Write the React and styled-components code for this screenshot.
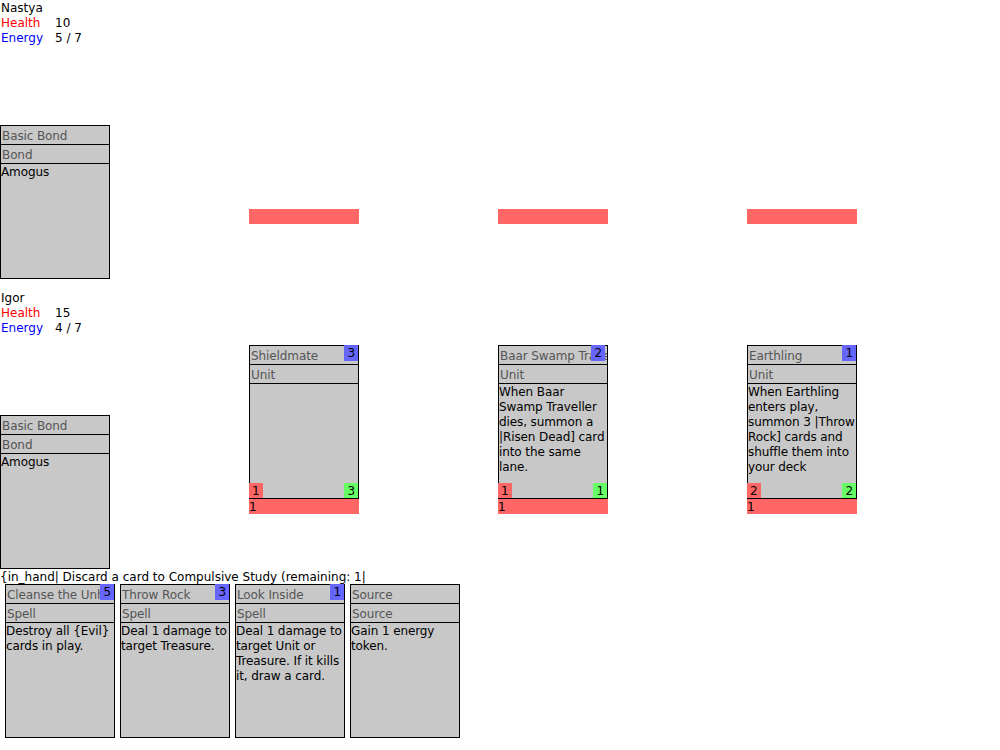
import React from "react";
import styled, { createGlobalStyle } from "styled-components";

const players = [
  {
    name: "Nastya",
    health: 10,
    energy: "5 / 7",
    bond: { title: "Basic Bond", type: "Bond", text: "Amogus" },
    lanes: [null, null, null],
  },
  {
    name: "Igor",
    health: 15,
    energy: "4 / 7",
    bond: { title: "Basic Bond", type: "Bond", text: "Amogus" },
    lanes: [
      { title: "Shieldmate", type: "Unit", cost: 3, attack: 1, hp: 3, text: "" },
      {
        title: "Baar Swamp Traveller",
        type: "Unit",
        cost: 2,
        attack: 1,
        hp: 1,
        text: "When Baar Swamp Traveller dies, summon a |Risen Dead] card into the same lane.",
        costInset: true,
      },
      {
        title: "Earthling",
        type: "Unit",
        cost: 1,
        attack: 2,
        hp: 2,
        text: "When Earthling enters play, summon 3 |Throw Rock] cards and shuffle them into your deck",
      },
    ],
  },
];

const hand = [
  { title: "Cleanse the Unholy", type: "Spell", cost: 5, text: "Destroy all {Evil} cards in play." },
  { title: "Throw Rock", type: "Spell", cost: 3, text: "Deal 1 damage to target Treasure." },
  { title: "Look Inside", type: "Spell", cost: 1, text: "Deal 1 damage to target Unit or Treasure. If it kills it, draw a card." },
  { title: "Source", type: "Source", text: "Gain 1 energy token." },
];

function Card({ card }) {
  return (
    <CardBox>
      <CardTitle>{card.title}</CardTitle>
      <CardType>{card.type}</CardType>
      <CardText>{card.text}</CardText>
      {card.cost !== undefined && <Cost $inset={card.costInset}>{card.cost}</Cost>}
      {card.attack !== undefined && <Attack>{card.attack}</Attack>}
      {card.hp !== undefined && <Health>{card.hp}</Health>}
    </CardBox>
  );
}

function Player({ player, first }) {
  return (
    <Section $first={first}>
      <Side>
        <Info>
          <div>{player.name}</div>
          <Stats>
            <Label $color="#ff0000">Health</Label>
            <span>{player.health}</span>
            <Label $color="#0000ff">Energy</Label>
            <span>{player.energy}</span>
          </Stats>
        </Info>
        <BondSlot>
          <Card card={player.bond} />
        </BondSlot>
      </Side>
      {player.lanes.map((c, i) => (
        <Lane key={i}>
          <Slot>{c && <Card card={c} />}</Slot>
          <LaneBar>{c ? "1" : ""}</LaneBar>
        </Lane>
      ))}
    </Section>
  );
}

export default function App() {
  return (
    <>
      <GlobalStyle />
      <Page>
        {players.map((p, i) => (
          <Player key={p.name} player={p} first={i === 0} />
        ))}
        <HandLabel>{"{in_hand| Discard a card to Compulsive Study (remaining: 1|"}</HandLabel>
        <HandRow>
          {hand.map((c) => (
            <Card key={c.title} card={c} />
          ))}
        </HandRow>
      </Page>
    </>
  );
}

const GlobalStyle = createGlobalStyle`
  body {
    margin: 0;
    background: #ffffff;
    font-family: "DejaVu Sans", "Noto Sans", sans-serif;
    font-size: 12px;
    line-height: 15px;
    color: #000000;
  }
`;

const Page = styled.div`
  width: 1000px;
`;

const Section = styled.section`
  display: grid;
  grid-template-columns: 249px 249px 249px 110px;
  align-items: center;
  margin-top: ${(p) => (p.$first ? "0" : "11px")};
`;

const Side = styled.div`
  display: flex;
  flex-direction: column;
`;

const Info = styled.div`
  box-sizing: border-box;
  height: 45px;
  padding: 1px 0 0 1px;
`;

const Stats = styled.div`
  display: grid;
  grid-template-columns: 54px auto;
`;

const Label = styled.span`
  color: ${(p) => p.$color};
`;

const BondSlot = styled.div`
  margin-top: 80px;
`;

const Lane = styled.div`
  display: flex;
  flex-direction: column;
  width: 110px;
`;

const Slot = styled.div`
  height: 154px;
`;

const LaneBar = styled.div`
  box-sizing: border-box;
  height: 15px;
  line-height: 15px;
  padding-top: 1px;
  overflow: hidden;
  background: #ff6666;
`;

const CardBox = styled.div`
  position: relative;
  box-sizing: border-box;
  width: 110px;
  height: 154px;
  border: 1px solid #000000;
  background: #c8c8c8;
  display: flex;
  flex-direction: column;
  letter-spacing: -0.1px;
`;

const CardTitle = styled.div`
  box-sizing: border-box;
  height: 19px;
  line-height: 18px;
  padding: 1px 0 0 1px;
  color: #555555;
  border-bottom: 1px solid #000000;
  white-space: nowrap;
  overflow: hidden;
`;

const CardType = styled(CardTitle)``;

const CardText = styled.div`
  flex: 1;
  padding-top: 1px;
  line-height: 15px;
  overflow: hidden;
`;

const Badge = styled.div`
  position: absolute;
  height: 15px;
  line-height: 16px;
  padding: 0 3px;
  color: #000000;
`;

const Cost = styled(Badge)`
  top: -1px;
  right: ${(p) => (p.$inset ? "2px" : "0")};
  height: 16px;
  line-height: 17px;
  background: #6666ff;
`;

const Attack = styled(Badge)`
  bottom: 0;
  left: -1px;
  background: #ff6666;
`;

const Health = styled(Badge)`
  bottom: 0;
  right: 0;
  background: #66ff66;
`;

const HandLabel = styled.div`
  box-sizing: border-box;
  height: 15px;
  padding-top: 1px;
  white-space: nowrap;
`;

const HandRow = styled.div`
  display: flex;
  gap: 5px;
  padding-left: 5px;
`;
